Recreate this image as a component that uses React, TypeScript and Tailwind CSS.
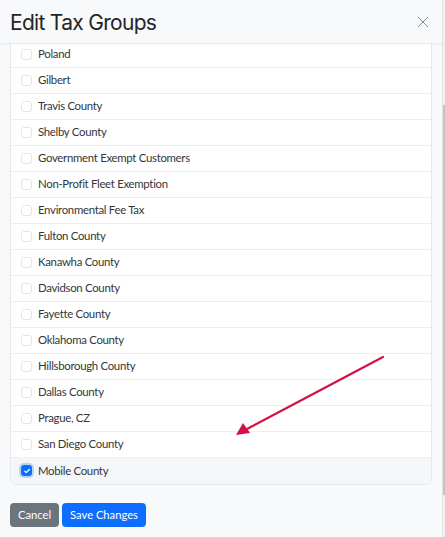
import React from 'react';

const groups = [
  'Poland',
  'Gilbert',
  'Travis County',
  'Shelby County',
  'Government Exempt Customers',
  'Non-Profit Fleet Exemption',
  'Environmental Fee Tax',
  'Fulton County',
  'Kanawha County',
  'Davidson County',
  'Fayette County',
  'Oklahoma County',
  'Hillsborough County',
  'Dallas County',
  'Prague, CZ',
  'San Diego County',
  'Mobile County',
];

const checked = 'Mobile County';

function Checkbox({ on }: { on: boolean }) {
  if (on) {
    return (
      <span className="flex h-[11px] w-[11px] shrink-0 items-center justify-center rounded-[3px] bg-[#0d6efd] ring-2 ring-[#0d6efd]/25">
        <svg viewBox="0 0 12 12" className="h-[8px] w-[8px]" fill="none">
          <path d="M2.5 6.2l2.3 2.3 4.7-4.8" stroke="#fff" strokeWidth="1.9" strokeLinecap="round" strokeLinejoin="round" />
        </svg>
      </span>
    );
  }
  return <span className="h-[11px] w-[11px] shrink-0 rounded-[3px] border border-[#e3e5e8] bg-white" />;
}

export default function App() {
  return (
    <div className="flex h-[537px] w-[445px] overflow-hidden bg-[#f8f9fa] font-['Lato',sans-serif] text-[#33373b]">
      <div className="flex min-w-0 flex-1 flex-col">
        {/* header */}
        <div className="relative z-10 flex h-[44px] shrink-0 items-center justify-between border-b border-[#e9ecef] bg-[#f8f9fa] pl-[10px] pr-[13px] shadow-[0_1px_2px_rgba(0,0,0,0.03)]">
          <h1 className="pt-[1px] font-['Inter',sans-serif] text-[21px] font-normal leading-none tracking-[-0.7px] text-[#212529]">
            Edit Tax Groups
          </h1>
          <svg viewBox="0 0 14 14" className="h-[12px] w-[12px]" fill="none">
            <path d="M1.5 1.5l11 11M12.5 1.5l-11 11" stroke="#7d848a" strokeWidth="1.1" strokeLinecap="round" />
          </svg>
        </div>

        {/* scrolled list */}
        <div className="h-[446px] shrink-0 overflow-hidden px-[10px]">
          <ul className="-mt-[3px] overflow-hidden rounded-b-[6px] border border-[#e6e8eb] bg-white">
            {groups.map((g) => {
              const on = g === checked;
              return (
                <li
                  key={g}
                  className={
                    'flex h-[26px] items-center gap-[6px] border-b border-[#eceef0] pb-[1px] pl-[10px] text-[11.4px] tracking-[-0.3px] last:border-b-0 ' +
                    (on ? 'bg-[#f5f6f8]' : 'bg-white')
                  }
                >
                  <Checkbox on={on} />
                  <span>{g}</span>
                </li>
              );
            })}
          </ul>
        </div>

        {/* footer */}
        <div className="flex gap-[3px] pl-[10px] pt-[13px]">
          <button className="h-[24px] rounded-[4px] bg-[#6c757d] px-[8px] text-[11.2px] text-white">Cancel</button>
          <button className="h-[24px] rounded-[4px] bg-[#0d6efd] px-[8px] text-[11.2px] text-white">Save Changes</button>
        </div>
      </div>

      {/* scrollbar */}
      <div className="flex w-[3px] shrink-0 flex-col border-l border-[#e4e6e8] bg-[#f1f1f1]">
        <div className="h-[105px]" />
        <div className="h-[390px] bg-[#c4c4c4]" />
      </div>

      {/* annotation arrow */}
      <svg className="pointer-events-none absolute left-0 top-0" width="445" height="537" viewBox="0 0 445 537">
        <line x1="383" y1="357" x2="247" y2="429" stroke="#d31145" strokeWidth="2.2" strokeLinecap="round" />
        <path d="M236 435 L243 423 L250 433 Z" fill="#d31145" />
      </svg>
    </div>
  );
}
